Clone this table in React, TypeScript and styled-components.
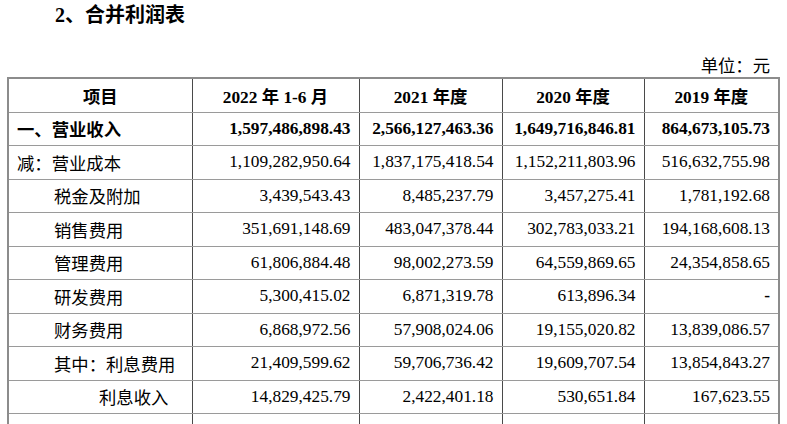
import React from "react";
import styled, { createGlobalStyle } from "styled-components";

const GlobalStyle = createGlobalStyle`
  html, body {
    margin: 0;
    padding: 0;
    background: #ffffff;
    overflow: hidden;
  }
  body {
    font-family: "Liberation Serif", "Noto Sans CJK SC", serif;
    color: #000000;
  }
`;

const Page = styled.div`
  width: 771px;
  margin-left: 7px;
`;

const Title = styled.h2`
  margin: 3px 0 0 48px;
  font-size: 15pt;
  line-height: 24px;
  font-weight: 700;
`;

const Unit = styled.div`
  margin-top: 28px;
  padding-right: 8px;
  text-align: right;
  font-family: "Noto Sans CJK SC", sans-serif;
  font-size: 13pt;
  line-height: 20px;
  height: 22px;
`;

const Table = styled.table`
  width: 771px;
  border-collapse: collapse;
  table-layout: fixed;
  border: 2px solid #8c8c8c;
`;

const Col = styled.col<{ $w: number }>`
  width: ${(p) => p.$w}px;
`;

const HeadCell = styled.th`
  height: 32.5px;
  padding: 0;
  border-left: 1px solid #4a4a4a;
  border-bottom: 1px solid #9a9a9a;
  font-size: 13pt;
  font-weight: 700;
  text-align: center;
  vertical-align: middle;
  white-space: nowrap;
`;

const LabelCell = styled.td<{ $indent: number; $bold?: boolean }>`
  height: 32.5px;
  padding: 0 0 0 ${(p) => 8 + p.$indent}px;
  border-bottom: 1px solid #9a9a9a;
  font-family: "Noto Sans CJK SC", sans-serif;
  font-size: 13pt;
  font-weight: ${(p) => (p.$bold ? 700 : 400)};
  white-space: nowrap;
  vertical-align: middle;
`;

const NumCell = styled.td<{ $bold?: boolean }>`
  height: 32.5px;
  padding: 0 8px 0 0;
  border-left: 1px solid #4a4a4a;
  border-bottom: 1px solid #9a9a9a;
  font-size: 13pt;
  font-weight: ${(p) => (p.$bold ? 700 : 400)};
  text-align: right;
  white-space: nowrap;
  vertical-align: middle;
`;

interface Row {
  key: string;
  label: string;
  indent: number;
  bold?: boolean;
  values: string[];
}

const columns = [184, 167, 143, 142, 135];
const headers = ["项目", "2022 年 1-6 月", "2021 年度", "2020 年度", "2019 年度"];

const rows: Row[] = [
  {
    key: "revenue",
    label: "一、营业收入",
    indent: 0,
    bold: true,
    values: ["1,597,486,898.43", "2,566,127,463.36", "1,649,716,846.81", "864,673,105.73"],
  },
  {
    key: "cost",
    label: "减：营业成本",
    indent: 0,
    values: ["1,109,282,950.64", "1,837,175,418.54", "1,152,211,803.96", "516,632,755.98"],
  },
  {
    key: "tax",
    label: "税金及附加",
    indent: 37,
    values: ["3,439,543.43", "8,485,237.79", "3,457,275.41", "1,781,192.68"],
  },
  {
    key: "selling",
    label: "销售费用",
    indent: 37,
    values: ["351,691,148.69", "483,047,378.44", "302,783,033.21", "194,168,608.13"],
  },
  {
    key: "admin",
    label: "管理费用",
    indent: 37,
    values: ["61,806,884.48", "98,002,273.59", "64,559,869.65", "24,354,858.65"],
  },
  { key: "rd", label: "研发费用", indent: 37, values: ["5,300,415.02", "6,871,319.78", "613,896.34", "-"] },
  {
    key: "finance",
    label: "财务费用",
    indent: 37,
    values: ["6,868,972.56", "57,908,024.06", "19,155,020.82", "13,839,086.57"],
  },
  {
    key: "interestCost",
    label: "其中：利息费用",
    indent: 37,
    values: ["21,409,599.62", "59,706,736.42", "19,609,707.54", "13,854,843.27"],
  },
  {
    key: "interestIncome",
    label: "利息收入",
    indent: 82,
    values: ["14,829,425.79", "2,422,401.18", "530,651.84", "167,623.55"],
  },
  // next row only shows its top edge in the frame
  { key: "more", label: "", indent: 0, values: ["", "", "", ""] },
];

export default function App() {
  return (
    <>
      <GlobalStyle />
      <Page>
        <Title>2、合并利润表</Title>
        <Unit>单位：元</Unit>
        <Table>
          <colgroup>
            {columns.map((w, i) => (
              <Col key={i} $w={w} />
            ))}
          </colgroup>
          <thead>
            <tr>
              {headers.map((h) => (
                <HeadCell key={h}>{h}</HeadCell>
              ))}
            </tr>
          </thead>
          <tbody>
            {rows.map((r) => (
              <tr key={r.key}>
                <LabelCell $indent={r.indent} $bold={r.bold}>
                  {r.label}
                </LabelCell>
                {r.values.map((v, i) => (
                  <NumCell key={i} $bold={r.bold || v === "-"}>
                    {v}
                  </NumCell>
                ))}
              </tr>
            ))}
          </tbody>
        </Table>
      </Page>
    </>
  );
}
